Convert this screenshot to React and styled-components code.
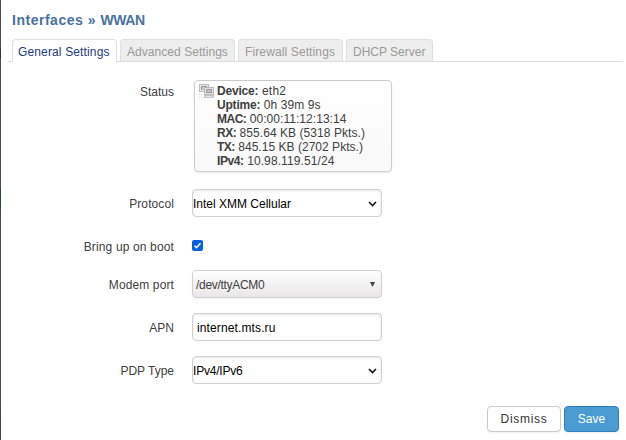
import React from "react";
import styled, { createGlobalStyle } from "styled-components";

const GlobalStyle = createGlobalStyle`
  * { box-sizing: border-box; }
  body { margin: 0; background: #fff; font-family: "Liberation Sans", Arial, sans-serif; overflow: hidden; }
`;

const Modal = styled.main`
  display: flex;
  width: 626px;
  height: 440px;
  background: #fff;
  color: #404040;
  font-size: 12px;
  line-height: 14px;
`;
const Edge = styled.div`
  width: 1px;
  height: 440px;
  background: linear-gradient(#4b4b4f 0 49px, #2c2f48 49px 58px, #4b4b4d 58px 189px, #2d4a33 189px 209px, #4b4b4d 209px 412px, #4f3d3f 412px);
`;
const Body = styled.div`
  flex: 1;
  display: flex;
  flex-direction: column;
  padding: 11px 3px 0 7px;
`;
const Title = styled.h1`
  margin: 0 0 10px 4px;
  height: 18px;
  font-size: 14px;
  line-height: 18px;
  letter-spacing: 0.52px;
  color: #4a729f;
`;
const NetworkName = styled.span`
  letter-spacing: -0.4px;
`;
const Tabs = styled.nav`
  display: flex;
  gap: 3px;
  height: 23px;
  padding: 0 4px;
  border-bottom: 1px solid #dcdcdc;
`;
const Tab = styled.a`
  width: ${(p) => p.$w}px;
  height: ${(p) => (p.$active ? 23 : 22)}px;
  padding: 5px 0 0 ${(p) => (p.$active ? 5 : 6)}px;
  border: 1px solid #e0e0e0;
  border-bottom: 0;
  border-radius: 4px 4px 0 0;
  background: ${(p) => (p.$active ? "#fff" : "#eee")};
  color: ${(p) => (p.$active ? "#1c3a80" : "#999")};
  letter-spacing: ${(p) => p.$ls || 0}px;
  white-space: nowrap;
`;
const Form = styled.div`
  display: flex;
  flex-direction: column;
`;
const Row = styled.div`
  display: grid;
  grid-template-columns: 166px 1fr;
  column-gap: 18px;
  align-items: start;
  height: ${(p) => p.$h}px;
`;
const Label = styled.label`
  padding-top: ${(p) => p.$top}px;
  text-align: right;
  letter-spacing: ${(p) => p.$ls || 0}px;
`;
const StatusBox = styled.div`
  display: flex;
  width: 198px;
  height: 92px;
  margin: 18px 0 0 2px;
  padding: 3px 0 0 4px;
  gap: 3px;
  border: 1px solid #ccc;
  border-radius: 4px;
  background: linear-gradient(#fff, #f8f8f8);
  box-shadow: 0 1px 2px rgba(0, 0, 0, 0.08);
`;
const Stats = styled.div`
  display: flex;
  flex-direction: column;
`;
const Stat = styled.div`
  white-space: nowrap;
  letter-spacing: ${(p) => p.$ls}px;
  b { letter-spacing: ${(p) => p.$bold}px; }
`;
const Field = styled.div`
  display: flex;
  align-items: center;
  justify-content: space-between;
  width: 190px;
  height: 28px;
  padding: 1px ${(p) => p.$right}px 0 ${(p) => p.$left}px;
  border: 1px solid #d0d0d0;
  border-radius: 4px;
  background: ${(p) => (p.$shaded ? "linear-gradient(#fff, #e8e6e6)" : "#fff")};
  box-shadow: ${(p) => (p.$shaded ? "0 1px 2px rgba(0,0,0,.05)" : "inset 0 1px 3px rgba(0,0,0,.1)")};
  color: ${(p) => (p.$shaded ? "#404040" : "#000")};
  letter-spacing: ${(p) => p.$ls || 0}px;
`;
const Check = styled.span`
  display: flex;
  align-items: center;
  justify-content: center;
  width: 11px;
  height: 11px;
  margin-top: 8px;
  border-radius: 2px;
  background: #0660df;
`;
const Footer = styled.footer`
  display: flex;
  justify-content: flex-end;
  gap: 3px;
  padding: 2px 4px 0 0;
`;
const Button = styled.button`
  width: ${(p) => p.$w}px;
  height: 26px;
  padding: 0;
  border: 1px solid ${(p) => (p.$primary ? "#2f7fbf" : "#ccc")};
  border-radius: 4px;
  background: ${(p) => (p.$primary ? "#4a9bd2" : "#fff")};
  color: ${(p) => (p.$primary ? "#fff" : "#333")};
  box-shadow: 0 1px 2px rgba(0, 0, 0, 0.06);
  font: 12px/14px "Liberation Sans", Arial, sans-serif;
  letter-spacing: ${(p) => p.$ls || 0}px;
`;

const Chevron = () => (
  <svg width="9" height="6" viewBox="0 0 9 6">
    <path d="M1 1l3.500 3.500L8 1" fill="none" stroke="#111" strokeWidth="1.6" />
  </svg>
);
const DeviceIcon = () => (
  <svg width="15" height="15" viewBox="0 0 15 15">
    <rect x="0.5" y="0.5" width="9" height="7" fill="#e5e5e5" stroke="#bbb" />
    <path d="M2.500 6V2.500H8" fill="none" stroke="#999" />
    <rect x="3" y="3" width="4" height="3" fill="#ccc" />
    <path d="M0 10.500H4M0 13.500H4" stroke="#ccc" strokeDasharray="1 1" />
    <rect x="5.500" y="3.500" width="9" height="7" fill="#e5e5e5" stroke="#bbb" />
    <rect x="7.500" y="5.500" width="5" height="3" fill="#c4c4c4" stroke="#999" />
    <rect x="5.500" y="11.500" width="9" height="2" fill="#e5e5e5" stroke="#c4c4c4" />
  </svg>
);

const stats = [
  ["Device:", "eth2", -0.2, 0.25],
  ["Uptime:", "0h 39m 9s", -0.2, 0.1],
  ["MAC:", "00:00:11:12:13:14", -0.5, 0.05],
  ["RX:", "855.64 KB (5318 Pkts.)", -0.5, 0.06],
  ["TX:", "845.15 KB (2702 Pkts.)", -0.5, 0.03],
  ["IPv4:", "10.98.119.51/24", -0.4, 0.1],
];

export default function App() {
  return (
    <>
      <GlobalStyle />
      <Modal>
        <Edge />
        <Body>
          <Title>Interfaces » <NetworkName>WWAN</NetworkName></Title>
          <Tabs>
            <Tab $active $w={105} $ls={0.14}>General Settings</Tab>
            <Tab $w={115} $ls={0.05}>Advanced Settings</Tab>
            <Tab $w={105} $ls={0.12}>Firewall Settings</Tab>
            <Tab $w={87}>DHCP Server</Tab>
          </Tabs>
          <Form>
            <Row $h={127}>
              <Label $top={23}>Status</Label>
              <StatusBox>
                <DeviceIcon />
                <Stats>
                  {stats.map(([name, value, bold, ls]) => (
                    <Stat key={name} $bold={bold} $ls={ls}><b>{name}</b> {value}</Stat>
                  ))}
                </Stats>
              </StatusBox>
            </Row>
            <Row $h={43}>
              <Label $top={8} $ls={0.1}>Protocol</Label>
              <Field $left={0} $right={4}>Intel XMM Cellular<Chevron /></Field>
            </Row>
            <Row $h={38}>
              <Label $top={8} $ls={0.14}>Bring up on boot</Label>
              <Check>
                <svg width="9" height="9" viewBox="0 0 9 9"><path d="M1.500 4.700l2 2 4-4.500" fill="none" stroke="#fff" strokeWidth="1.600" /></svg>
              </Check>
            </Row>
            <Row $h={43}>
              <Label $top={8} $ls={0.12}>Modem port</Label>
              <Field $shaded $left={3} $right={6} $ls={-0.3}>/dev/ttyACM0
                <svg width="5" height="5" viewBox="0 0 5 5"><path d="M0 0h5L2.500 5z" fill="#404040" /></svg>
              </Field>
            </Row>
            <Row $h={43}>
              <Label $top={8}>APN</Label>
              <Field $left={4} $right={4} $ls={0.12}>internet.mts.ru</Field>
            </Row>
            <Row $h={48}>
              <Label $top={8}>PDP Type</Label>
              <Field $left={0} $right={4} $ls={-0.2}>IPv4/IPv6<Chevron /></Field>
            </Row>
          </Form>
          <Footer>
            <Button $w={74} $ls={0.7}>Dismiss</Button>
            <Button $w={55} $primary>Save</Button>
          </Footer>
        </Body>
      </Modal>
    </>
  );
}
